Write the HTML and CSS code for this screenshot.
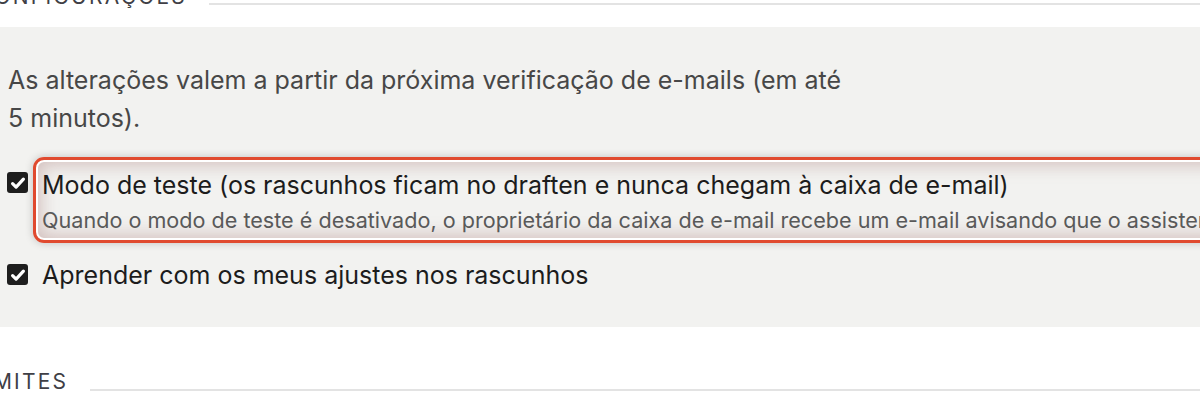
FILE: index.html
```html
<!DOCTYPE html>
<html lang="pt-BR">
<head>
<meta charset="utf-8">
<link rel="stylesheet" href="styles.css">
</head>
<body>
<div class="page">
  <div class="section-head head-top">
    <span class="section-title">Configurações</span>
    <span class="section-rule"></span>
  </div>
  <div class="panel">
    <p class="note">As alterações valem a partir da próxima verificação de e-mails (em até 5 minutos).</p>
    <div class="options">
      <label class="option">
        <span class="check check-hl"><svg viewBox="0 0 20 20" width="20" height="20"><path d="M4.6 10.6l3.5 3.5L15.4 6.2" fill="none" stroke="#fff" stroke-width="3.2" stroke-linecap="round" stroke-linejoin="round"/></svg></span>
        <span class="highlight">
          <span class="opt-title">Modo de teste (os rascunhos ficam no draften e nunca chegam à caixa de e-mail)</span>
          <span class="opt-sub">Quando o modo de teste é desativado, o proprietário da caixa de e-mail recebe um e-mail avisando que o assistente começou a enviar rascunhos.</span>
        </span>
      </label>
      <label class="option">
        <span class="check"><svg viewBox="0 0 20 20" width="20" height="20"><path d="M4.6 10.6l3.5 3.5L15.4 6.2" fill="none" stroke="#fff" stroke-width="3.2" stroke-linecap="round" stroke-linejoin="round"/></svg></span>
        <span class="opt-title">Aprender com os meus ajustes nos rascunhos</span>
      </label>
    </div>
  </div>
  <div class="section-head head-bottom">
    <span class="section-title">Limites</span>
    <span class="section-rule"></span>
  </div>
</div>
</body>
</html>
```
FILE: styles.css
```css
html, body {
  margin: 0;
  padding: 0;
  background: #ffffff;
  overflow: hidden;
  width: 1200px;
  height: 400px;
}
body {
  font-family: "Inter", "Noto Sans", sans-serif;
  color: #1c1c1c;
}
.page {
  width: 1500px;
  margin-left: -25px;
  margin-top: -15px;
}
.section-head {
  display: flex;
  align-items: flex-end;
  gap: 22px;
  height: 24px;
}
.head-top {
  padding-left: 2px;
}
.section-title {
  font-size: 21px;
  line-height: 24px;
  letter-spacing: 2.2px;
  text-transform: uppercase;
  color: #3f3f46;
  white-space: nowrap;
}
.section-rule {
  flex: 1;
  height: 2px;
  background: #e3e3e3;
  margin-bottom: 4px;
}
.panel {
  margin-top: 18px;
  background: #f2f2f0;
  padding: 34px 0 37px 33px;
}
.note {
  margin: 0;
  max-width: 848px;
  font-size: 25px;
  line-height: 38px;
  color: #474747;
}
.options {
  margin-top: 20px;
  display: flex;
  flex-direction: column;
  gap: 17px;
}
.option {
  display: flex;
  align-items: flex-start;
  gap: 14px;
}
.check {
  flex: none;
  width: 21px;
  height: 21px;
  border-radius: 3px;
  background: #1e1e1e;
  display: flex;
  align-items: center;
  justify-content: center;
  margin-top: 4px;
  margin-left: -1px;
}
.check-hl {
  margin-top: 15px;
}
.highlight {
  flex: 1;
  display: flex;
  flex-direction: column;
  margin-left: -9px;
  border: 3px solid #e04a2f;
  border-radius: 11px;
  padding: 10px 0 5px 6px;
  white-space: nowrap;
  box-shadow: 0 0 9px rgba(0,0,0,0.2), inset 0 0 0 2px #ffffff, inset 0 0 16px 6px rgba(160,110,105,0.35);
}
.opt-title {
  font-size: 25px;
  line-height: 30px;
  color: #1c1c1c;
  white-space: nowrap;
}
.opt-sub {
  margin-top: 5px;
  font-size: 21.6px;
  line-height: 30px;
  color: #595959;
  white-space: nowrap;
}
.head-bottom {
  margin-top: 43px;
  margin-left: -4px;
}
.head-bottom .section-rule {
  margin-bottom: 3px;
}
```
